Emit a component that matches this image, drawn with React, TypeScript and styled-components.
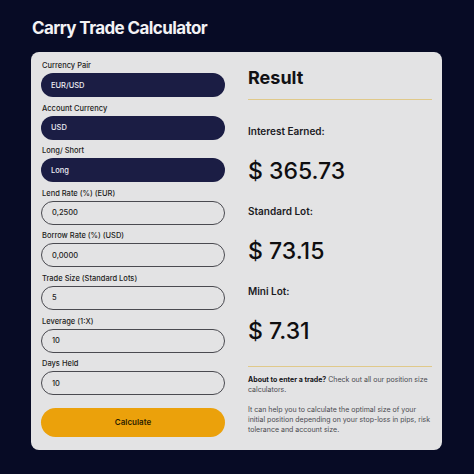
import styled, { createGlobalStyle } from "styled-components"

const GlobalStyle = createGlobalStyle`
  html, body {
    margin: 0;
    padding: 0;
    background: #070b25;
    font-family: Inter, "Noto Sans", sans-serif;
  }
`

const Page = styled.div`
  width: 474px;
  height: 474px;
  box-sizing: border-box;
  padding: 17px 31px 0 32px;
  background: #070b25;
`

const Heading = styled.h1`
  margin: 0 0 13px 0;
  font-size: 17px;
  font-weight: 700;
  line-height: 22px;
  color: #f2f2f4;
  letter-spacing: -0.6px;
`

const Card = styled.div`
  display: grid;
  grid-template-columns: 184px 184px;
  column-gap: 23px;
  align-items: start;
  width: 411px;
  box-sizing: border-box;
  margin-left: -1px;
  padding: 9px 10px 13px 10px;
  background: #e3e3e4;
  border-radius: 8px;
`

const Form = styled.div`
  display: flex;
  flex-direction: column;
`

const Field = styled.div`
  display: flex;
  flex-direction: column;
  gap: 2px;
  margin-bottom: 6.6px;
`

const Label = styled.label`
  font-size: 7.5px;
  line-height: 10px;
  font-weight: 500;
  color: #1d1d22;
  padding-left: 1px;
`

const Input = styled.div<{ $dark?: boolean }>`
  height: 24px;
  box-sizing: border-box;
  display: flex;
  align-items: center;
  padding-left: 10px;
  border-radius: 12px;
  font-size: 7.5px;
  font-weight: 500;
  background: ${(p) => (p.$dark ? "#1b1d44" : "#e3e3e4")};
  color: ${(p) => (p.$dark ? "#eeeef4" : "#1d1d22")};
  border: ${(p) => (p.$dark ? "none" : "1px solid #4a4a50")};
`

const Button = styled.button`
  margin-top: 6px;
  height: 29px;
  border: none;
  border-radius: 15px;
  background: #eba10b;
  color: #2b1d00;
  font-family: Inter, sans-serif;
  font-size: 8px;
  font-weight: 600;
`

const Result = styled.div`
  display: flex;
  flex-direction: column;
  padding-top: 5px;
`

const ResultTitle = styled.h2`
  margin: 0;
  font-size: 18px;
  line-height: 24px;
  font-weight: 700;
  color: #111114;
`

const Rule = styled.div<{ $top: number }>`
  height: 1px;
  background: #e0c98a;
  margin-top: ${(p) => p.$top}px;
`

const StatLabel = styled.div<{ $top: number }>`
  margin-top: ${(p) => p.$top}px;
  font-size: 10px;
  line-height: 12px;
  font-weight: 600;
  color: #1b1b1f;
`

const StatValue = styled.div`
  margin-top: 20.5px;
  font-size: 23px;
  line-height: 28px;
  font-weight: 500;
  color: #0e0e10;
`

const Note = styled.p<{ $top: number }>`
  margin: ${(p) => p.$top}px 0 0 0;
  font-size: 7px;
  line-height: 10px;
  color: #4a4a50;

  > b {
    color: #141418;
    font-weight: 700;
  }
`

const fields = [
  { label: "Currency Pair", value: "EUR/USD", dark: true },
  { label: "Account Currency", value: "USD", dark: true },
  { label: "Long/ Short", value: "Long", dark: true },
  { label: "Lend Rate (%) (EUR)", value: "0,2500" },
  { label: "Borrow Rate (%) (USD)", value: "0,0000" },
  { label: "Trade Size (Standard Lots)", value: "5" },
  { label: "Leverage (1:X)", value: "10" },
  { label: "Days Held", value: "10" },
]

const App = () => {
  return (
    <Page>
      <GlobalStyle />
      <Heading>Carry Trade Calculator</Heading>
      <Card>
        <Form>
          {fields.map((f) => (
            <Field key={f.label}>
              <Label>{f.label}</Label>
              <Input $dark={f.dark}>{f.value}</Input>
            </Field>
          ))}
          <Button>Calculate</Button>
        </Form>
        <Result>
          <ResultTitle>Result</ResultTitle>
          <Rule $top={9} />
          <StatLabel $top={24.6}>Interest Earned:</StatLabel>
          <StatValue>$ 365.73</StatValue>
          <StatLabel $top={19.5}>Standard Lot:</StatLabel>
          <StatValue>$ 73.15</StatValue>
          <StatLabel $top={19.5}>Mini Lot:</StatLabel>
          <StatValue>$ 7.31</StatValue>
          <Rule $top={20.5} />
          <Note $top={8.7}>
            <b>About to enter a trade?</b> Check out all our position size calculators.
          </Note>
          <Note $top={10}>
            It can help you to calculate the optimal size of your initial position depending on your stop-loss in pips, risk tolerance and account size.
          </Note>
        </Result>
      </Card>
    </Page>
  )
}

export default App
